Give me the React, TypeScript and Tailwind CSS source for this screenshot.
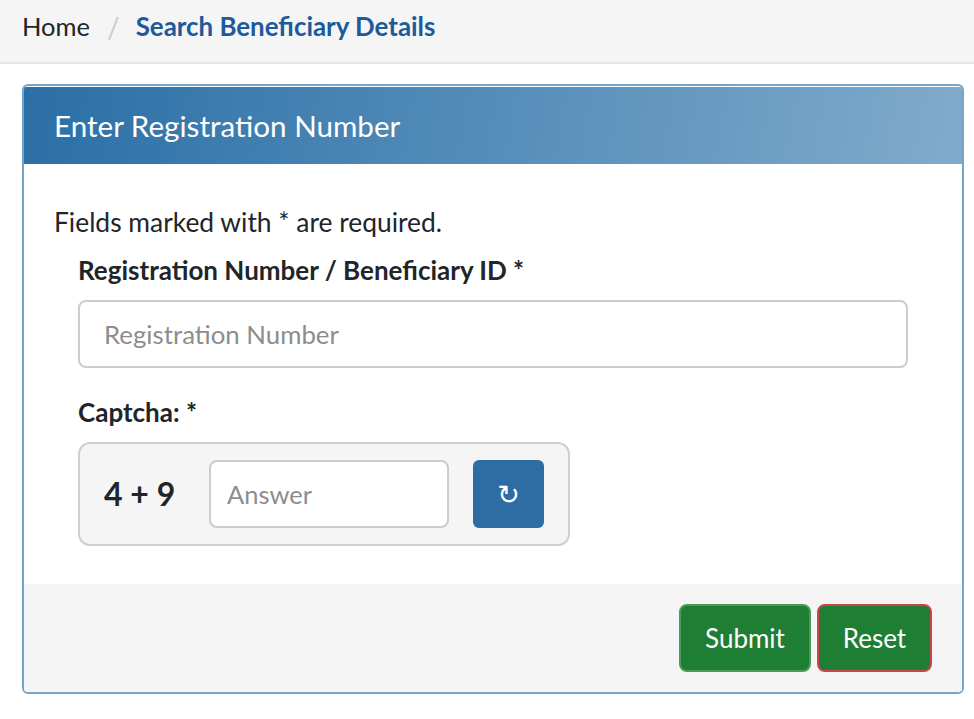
import React from "react";

export default function App() {
  return (
    <div className="h-[719px] w-[974px] overflow-hidden bg-white font-['Lato',sans-serif] text-[#212529]">
      <nav className="flex h-[64px] items-center border-b-2 border-[#e5e5e5] bg-[#f5f5f5] pb-[9px] pl-[22px]">
        <span className="text-[25.5px] leading-none">Home</span>
        <span className="ml-[17px] mr-[16px] text-[28px] leading-none text-[#cccccc]">/</span>
        <span className="text-[25.9px] font-bold leading-none text-[#1c5a9a]">Search Beneficiary Details</span>
      </nav>
      <div className="ml-[22px] mt-[20px] w-[942px] overflow-hidden rounded-[6px] border-2 border-[#75a5c9] bg-white">
        <div className="mt-[1px] flex h-[77px] items-center bg-[linear-gradient(100deg,#2a6fa6,#80abcc)] pl-[30px] pt-[2px] text-[29.6px] text-white">
          Enter Registration Number
        </div>
        <div className="h-[420px] pl-[30px] pt-[42px]">
          <p className="text-[26.4px] leading-[32px]">Fields marked with * are required.</p>
          <div className="pl-[24px] pr-[24px]">
            <label className="mt-[16px] block text-[26px] font-bold leading-[32px]">Registration Number / Beneficiary ID *</label>
            <input
              placeholder="Registration Number"
              className="mt-[14px] block h-[68px] w-[830px] rounded-[8px] border-2 border-[#cccccc] px-[24px] text-[25.8px] outline-none placeholder:text-[#8d8d8d]"
            />
            <label className="mt-[28px] block text-[26px] font-bold leading-[32px]">Captcha: *</label>
            <div className="mt-[14px] flex h-[104px] w-[492px] items-center rounded-[12px] border-2 border-[#d0d0d0] bg-[#f5f5f5] pl-[24px]">
              <span className="w-[71px] whitespace-nowrap text-[32px] font-bold leading-none">4 + 9</span>
              <input
                placeholder="Answer"
                className="ml-[34px] h-[68px] w-[240px] rounded-[8px] border-2 border-[#cccccc] bg-white px-[16px] text-[25.5px] outline-none placeholder:text-[#8d8d8d]"
              />
              <button className="ml-[24px] flex h-[68px] w-[71px] items-center justify-center rounded-[6px] bg-[#2e6da4] pt-[3px] font-['DejaVu_Sans',sans-serif] text-[27px] text-white">
                ↻
              </button>
            </div>
          </div>
        </div>
        <div className="flex h-[108px] items-center justify-end gap-[6px] bg-[#f5f5f5] pr-[30px]">
          <button className="h-[68px] w-[132px] rounded-[8px] border-2 border-[#4c9a5a] bg-[#1e7e34] text-[26px] text-white">Submit</button>
          <button className="h-[68px] w-[115px] rounded-[8px] border-2 border-[#c9444c] bg-[#1e7e34] text-[26px] text-white">Reset</button>
        </div>
      </div>
    </div>
  );
}
